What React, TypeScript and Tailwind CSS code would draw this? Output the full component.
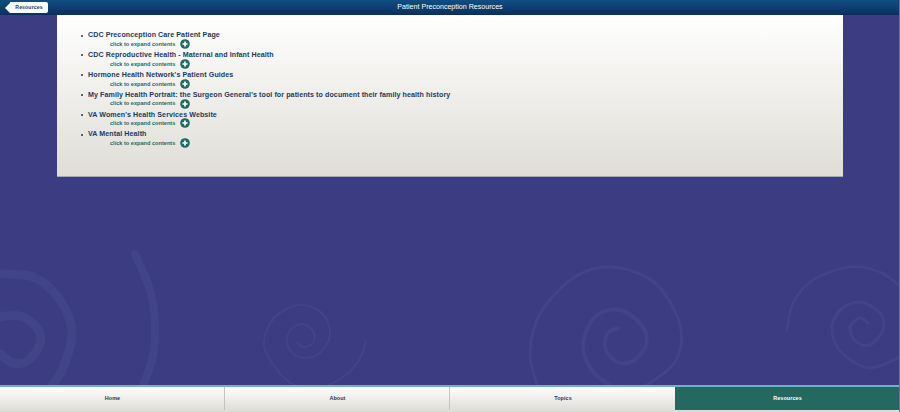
const items = [
  "CDC Preconception Care Patient Page",
  "CDC Reproductive Health - Maternal and Infant Health",
  "Hormone Health Network's Patient Guides",
  "My Family Health Portrait: the Surgeon General's tool for patients to document their family health history",
  "VA Women's Health Services Website",
  "VA Mental Health",
];

const tabs = ["Home", "About", "Topics", "Resources"];

type P = [number, number];

function smooth(pts: P[]): string {
  let d = `M${pts[0][0]} ${pts[0][1]}`;
  for (let i = 0; i < pts.length - 1; i++) {
    const p0 = pts[Math.max(i - 1, 0)];
    const p1 = pts[i];
    const p2 = pts[i + 1];
    const p3 = pts[Math.min(i + 2, pts.length - 1)];
    const c1x = p1[0] + (p2[0] - p0[0]) / 6;
    const c1y = p1[1] + (p2[1] - p0[1]) / 6;
    const c2x = p2[0] - (p3[0] - p1[0]) / 6;
    const c2y = p2[1] - (p3[1] - p1[1]) / 6;
    d += ` C${c1x} ${c1y} ${c2x} ${c2y} ${p2[0]} ${p2[1]}`;
  }
  return d;
}

const spirals: { pts: P[]; w: number }[] = [
  { w: 8, pts: [[135, 254], [150, 290], [155, 325], [152, 360], [141, 390]] },
  { w: 9, pts: [[-5, 274], [33, 277], [60, 300], [72, 333], [62, 370], [48, 390]] },
  { w: 9, pts: [[-5, 317], [20, 316], [37, 328], [40, 343], [29, 360], [13, 363], [0, 354]] },
  { w: 2, pts: [[366, 341], [358, 362], [340, 379], [318, 388], [296, 386], [277, 370], [264, 345], [274, 318], [300, 305], [323, 314], [330, 335], [320, 353], [303, 358], [290, 350], [287, 337], [295, 326], [306, 325], [314, 333], [313, 343], [304, 347], [297, 342]] },
  { w: 3, pts: [[537, 386], [530, 352], [541, 312], [575, 277], [613, 267], [655, 283], [680, 325], [675, 362], [645, 386]] },
  { w: 4, pts: [[612, 386], [593, 372], [583, 345], [595, 317], [620, 310], [643, 327], [646, 345], [633, 361], [617, 362], [605, 348], [608, 333], [618, 328]] },
  { w: 2.5, pts: [[787, 330], [793, 303], [813, 280], [850, 267], [880, 272], [902, 288]] },
  { w: 3, pts: [[902, 356], [870, 368], [842, 353], [832, 330], [840, 310], [860, 302], [880, 313], [883, 330], [870, 345], [855, 341], [850, 327], [860, 318], [868, 323]] },
];

function PlusIcon() {
  return (
    <svg width="10" height="10" viewBox="0 0 10 10" className="shrink-0">
      <circle cx="5" cy="5" r="4.8" fill="#1f6a60" />
      <path d="M5 2.4V7.6M2.4 5H7.6" stroke="#ffffff" strokeWidth="1.7" />
    </svg>
  );
}

export default function App() {
  return (
    <div className="relative flex h-[412px] w-[900px] flex-col overflow-hidden bg-[#3b3c82] font-['Liberation_Sans',Arial,sans-serif] antialiased">
      <svg className="absolute inset-0" width="900" height="412" viewBox="0 0 900 412" fill="none">
        {spirals.map((s, i) => (
          <path key={i} d={smooth(s.pts)} stroke="#424488" strokeWidth={s.w} strokeLinecap="round" />
        ))}
      </svg>

      <header className="relative flex h-[15px] shrink-0 items-center justify-center bg-gradient-to-b from-[#0e4f83] to-[#0b2f5e]">
        <span className="text-[7.1px] leading-none text-white">Patient Preconception Resources</span>
        <div className="absolute left-[5px] top-[2px] flex h-[11px] items-center">
          <div className="h-0 w-0 border-y-[5.5px] border-r-[5px] border-y-transparent border-r-white" />
          <div className="flex h-[11px] w-[38px] items-center justify-center rounded-r-[2px] bg-white text-[5.2px] font-bold tracking-[0.1px] text-[#1c3a5e]">
            Resources
          </div>
        </div>
      </header>

      <main className="relative mx-[57px] h-[162px] shrink-0 border-b border-[#a9a9b5] bg-gradient-to-b from-white to-[#dfddd6] pl-[24px] pt-[16px]">
        <ul className="flex flex-col">
          {items.map((t) => (
            <li key={t} className="flex h-[19.85px] flex-col">
              <div className="flex h-[9px] items-center">
                <span className="h-[2px] w-[2px] rounded-full bg-[#1c3a5e]" />
                <span className="ml-[5px] whitespace-nowrap text-[7.1px] font-bold tracking-[0.085px] text-[#1c3a5e]">{t}</span>
              </div>
              <div className="flex h-[8px] items-center pl-[29px]">
                <span className="w-[69.5px] whitespace-nowrap text-[5.6px] font-bold text-[#1f6a60]">click to expand contents</span>
                <PlusIcon />
              </div>
            </li>
          ))}
        </ul>
      </main>

      <div className="grow" />

      <nav className="relative grid h-[27px] shrink-0 grid-cols-4 border-t-2 border-[#6fb0cc] bg-[#dcdcd8] pb-[2px]">
        {tabs.map((t, i) =>
          t === "Resources" ? (
            <div key={t} className="flex items-center justify-center bg-[#23695f] text-[5.4px] font-bold tracking-[0.1px] text-white">
              {t}
            </div>
          ) : (
            <div
              key={t}
              className={`flex items-center justify-center bg-gradient-to-b from-white to-[#dfddd8] pl-[1px] text-[5.4px] font-bold tracking-[0.1px] text-[#1c3a5e] ${i < 2 ? "border-r border-[#c4c4c0]" : ""}`}
            >
              {t}
            </div>
          )
        )}
      </nav>
      <div className="absolute bottom-0 right-0 top-0 w-px bg-[#6d6fae]" />
    </div>
  );
}
